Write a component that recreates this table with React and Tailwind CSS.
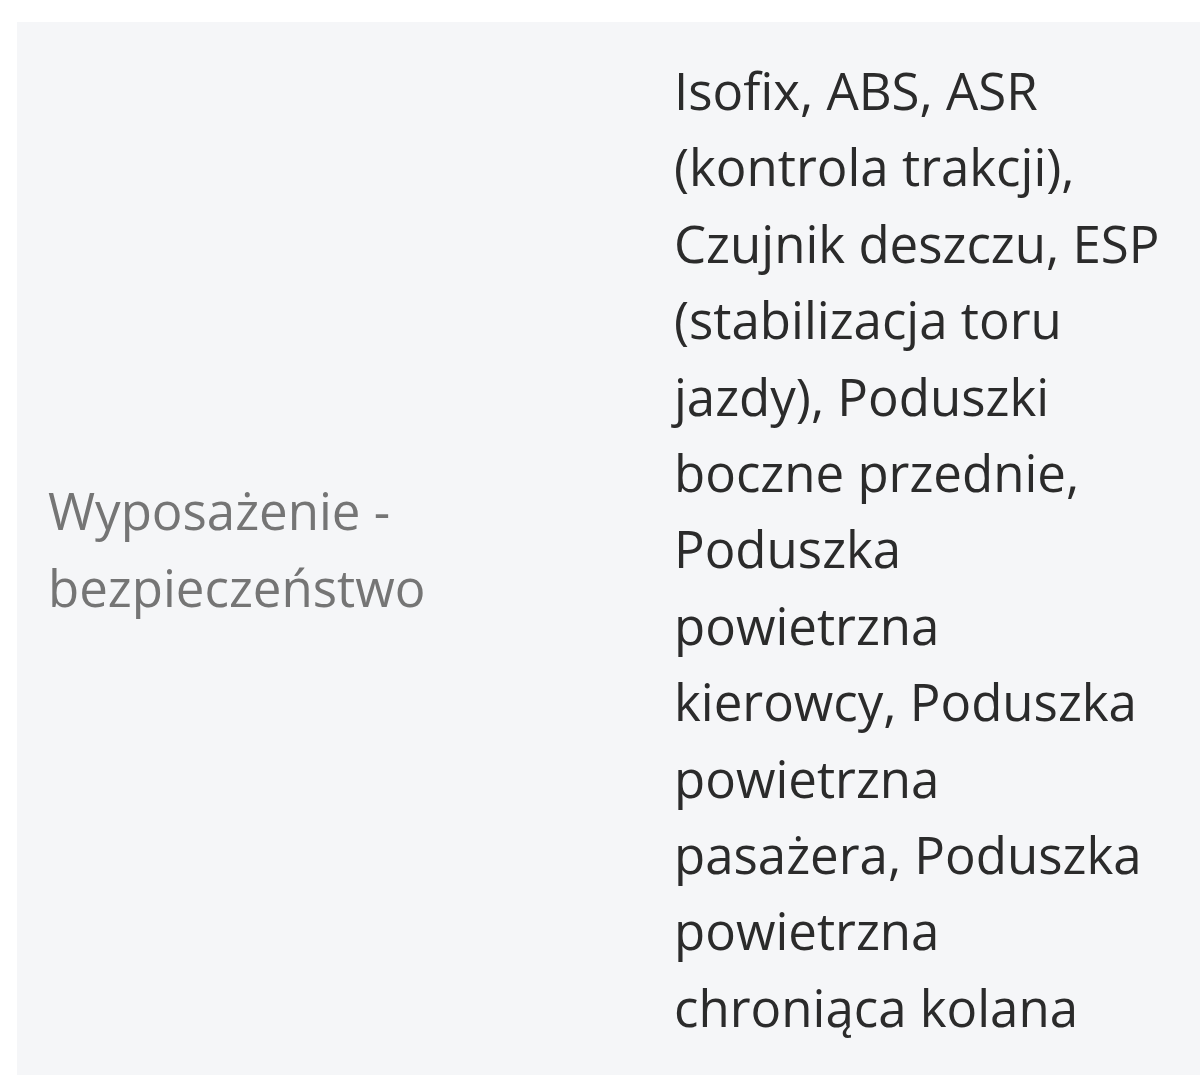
export default function App() {
  return (
    <div className="min-h-[1080px] bg-white pt-[22px] pl-[17px]" style={{ fontFamily: '"Open Sans", sans-serif' }}>
      <div className="flex items-center bg-[#f5f6f8] py-[30px]">
        <div className="w-[626px] shrink-0 pl-[31px] pr-[20px] text-[51px] leading-[76.4px] text-[#757575]">
          Wyposażenie - bezpieczeństwo
        </div>
        <div className="w-[531px] shrink-0 pl-[31px] text-[51px] leading-[76.4px] text-[#2b2b2b]">
          Isofix, ABS, ASR (kontrola trakcji), Czujnik deszczu, ESP (stabilizacja toru jazdy), Poduszki boczne przednie, Poduszka powietrzna kierowcy, Poduszka powietrzna pasażera, Poduszka powietrzna chroniąca kolana
        </div>
        <div className="flex-1" />
      </div>
    </div>
  );
}
